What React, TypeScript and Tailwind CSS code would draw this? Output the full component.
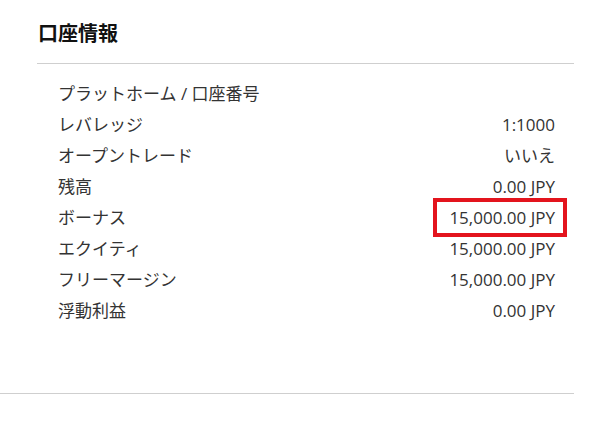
import React from 'react';

const rows: { label: string; value: string; highlight?: boolean }[] = [
    { label: 'プラットホーム / 口座番号', value: '' },
    { label: 'レバレッジ', value: '1:1000' },
    { label: 'オープントレード', value: 'いいえ' },
    { label: '残高', value: '0.00 JPY' },
    { label: 'ボーナス', value: '15,000.00 JPY', highlight: true },
    { label: 'エクイティ', value: '15,000.00 JPY' },
    { label: 'フリーマージン', value: '15,000.00 JPY' },
    { label: '浮動利益', value: '0.00 JPY' },
];

export default function App() {
    return (
        <div className="w-[598px] h-[438px] bg-white font-['Open_Sans','Noto_Sans_CJK_JP',sans-serif] text-[#333]">
            <div className="pl-[37px] pr-[24px] pt-[19px]">
                <h2 className="pl-px text-[20px] leading-[28px] font-bold text-[#111] font-['Noto_Sans_CJK_JP',sans-serif]">口座情報</h2>
                <div className="mt-[16px] h-px bg-[#cfcfcf]" />
                <div className="pt-[14px] pl-[21px] pr-[19px]">
                    {rows.map((r) => (
                        <div key={r.label} className="flex justify-between items-center h-[31px] text-[17px] leading-[31px]">
                            <span>{r.label}</span>
                            {r.highlight ? (
                                <span className="relative">
                                    {r.value}
                                    <span className="absolute -left-[16px] -right-[12px] -top-[4px] -bottom-[4px] border-4 border-[#e3141d]" />
                                </span>
                            ) : (
                                <span>{r.value}</span>
                            )}
                        </div>
                    ))}
                </div>
            </div>
            <div className="mt-[67px] w-[574px] h-px bg-[#cfcfcf]" />
        </div>
    );
}
